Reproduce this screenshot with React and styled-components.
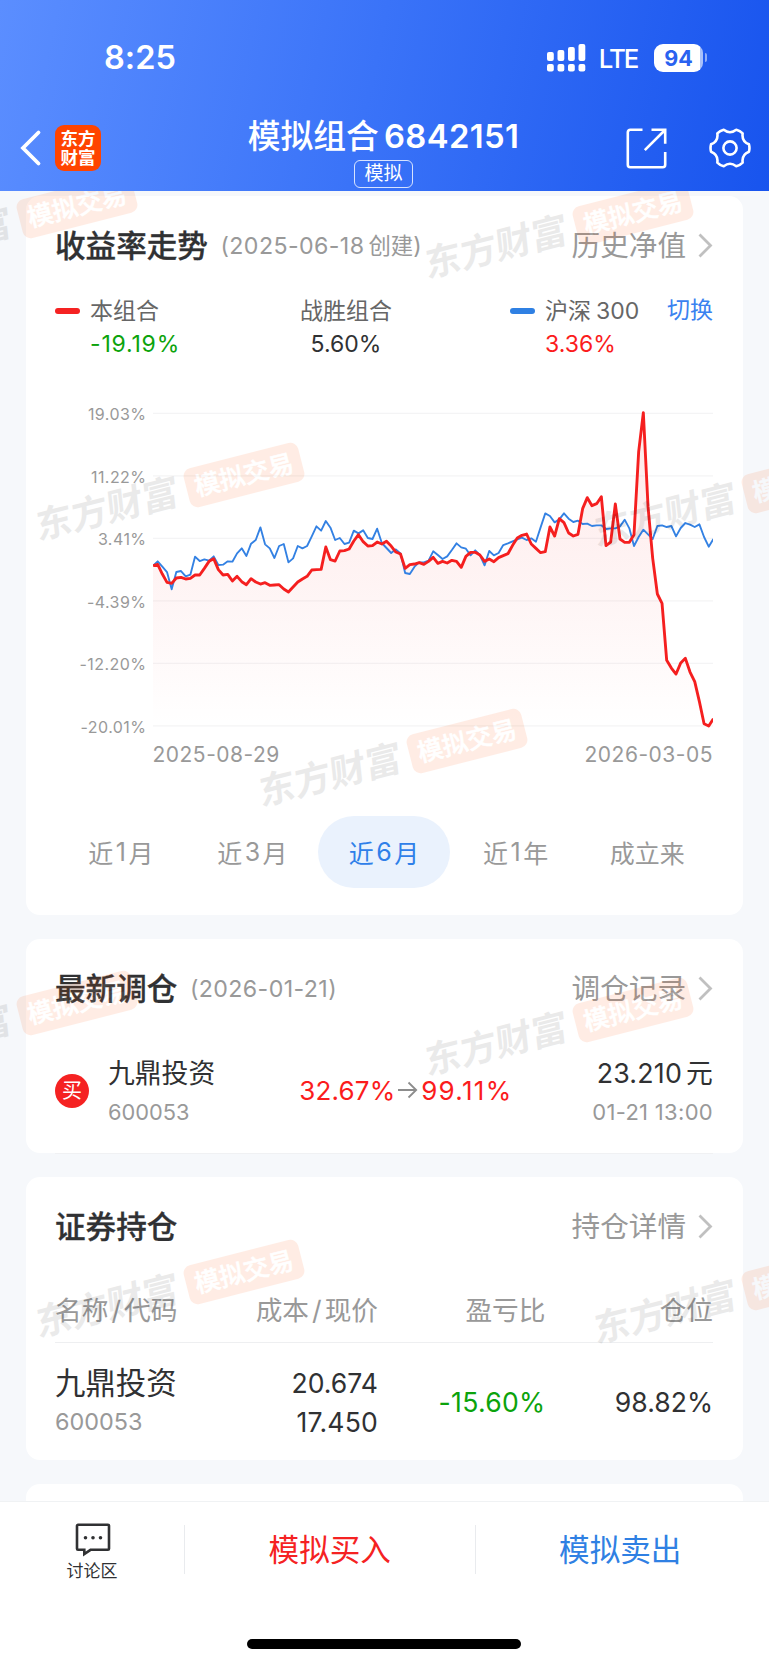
import React from "react";
import styled, { createGlobalStyle, css } from "styled-components";

const GlobalStyle = createGlobalStyle`
  * {
    box-sizing: border-box;
  }
  body {
    margin: 0;
    background: #f6f8fb;
    color: #303133;
    font-family: Inter, "Noto Sans CJK SC", sans-serif;
    font-feature-settings: "calt" 0;
  }
`

const Page = styled.div`
  width: 769px;
  height: 1665px;
  display: flex;
  flex-direction: column;
  overflow: hidden;
`

/* ---------- cabecera ---------- */
const Header = styled.header`
  height: 191px;
  flex: none;
  color: #fff;
  background: linear-gradient(102deg, #5b8eff 0%, #3a73f8 48%, #1854ee 100%);
`
const StatusBar = styled.div`
  height: 105px;
  padding: 37px 62px 0 104px;
  display: flex;
  justify-content: space-between;
`
const Clock = styled.span`
  font-size: 32.5px;
  font-weight: 600;
  line-height: 42px;
`
const StatusIcons = styled.div`
  height: 41px;
  display: flex;
  align-items: center;
`
const Network = styled.span`
  margin: 2px 0 0 13px;
  font-size: 25.8px;
  font-weight: 500;
  letter-spacing: -1.9px;
  line-height: 30px;
`
const Battery = styled.span`
  width: 49px;
  height: 28px;
  margin-left: 16.5px;
  border-radius: 9px;
  background: linear-gradient(90deg, #fff 46px, #a9c1fa 46px);
  color: #2a62f0;
  font-size: 21.5px;
  font-weight: 700;
  line-height: 28px;
  text-align: center;
`
const BatteryTip = styled.span`
  width: 2.5px;
  height: 9px;
  margin-left: 1.5px;
  border-radius: 0 3px 3px 0;
  background: #8fadf8;
`
const NavBar = styled.div`
  height: 86px;
  padding: 0 18px 0 19px;
  display: grid;
  grid-template-columns: 1fr auto 1fr;
  align-items: center;
`
const NavLeft = styled.div`
  display: flex;
  align-items: center;
  gap: 13px;
`
const NavRight = styled.div`
  display: flex;
  align-items: center;
  justify-content: flex-end;
  gap: 42px;
`
const AppLogo = styled.span`
  width: 46px;
  height: 46px;
  padding-top: 5px;
  border-radius: 9px;
  background: #ff4400;
  font-size: 17.5px;
  font-weight: 700;
  line-height: 18.5px;
  text-align: center;
`
const TitleBlock = styled.div`
  margin-right: 3px;
  padding-top: 8px;
  display: flex;
  flex-direction: column;
  align-items: center;
  gap: 4px;
`
const Title = styled.h1`
  margin: 0;
  display: flex;
  gap: 5px;
  font-size: 32.8px;
  font-weight: 500;
  line-height: 39px;
  b {
    font-weight: 600;
    letter-spacing: 0.4px;
  }
`
const TitleTag = styled.span`
  height: 28px;
  padding: 0 9px;
  border: 1.5px solid rgba(255, 255, 255, 0.8);
  border-radius: 6px;
  font-size: 19px;
  line-height: 26px;
`

/* ---------- contenido ---------- */
const Main = styled.main`
  position: relative;
  height: 1310px;
  flex: none;
  padding: 5px 26.5px 0 26px;
  display: flex;
  flex-direction: column;
  gap: 24px;
  overflow: hidden;
`
const Card = styled.section`
  flex: none;
  height: ${({ $height }) => $height}px;
  padding: 29.5px 29.5px 0 29px;
  border-radius: 14px;
  background: #fff;
`
const CardHead = styled.div`
  height: 40px;
  display: flex;
  align-items: center;
`
const CardTitle = styled.h2`
  margin: 0;
  font-size: 30.6px;
  font-weight: 500;
  line-height: 40px;
  -webkit-text-stroke: 0.3px currentColor;
`
const CardDate = styled.span`
  display: flex;
  gap: 4px;
  margin-left: 12.5px;
  color: #999;
  font-size: 23.2px;
  letter-spacing: 0.4px;
  line-height: 40px;
  i {
    font-style: normal;
    font-size: 22.4px;
    letter-spacing: 0;
  }
`
const CardLink = styled.a`
  margin-left: auto;
  display: flex;
  align-items: center;
  gap: 12px;
  color: #999;
  font-size: 28.6px;
  line-height: 40px;
`

/* leyenda del grafico */
const Legend = styled.div`
  margin-top: 31px;
  display: grid;
  grid-template-columns: 245px 210px 1fr;
  justify-items: start;
`
const LegendItem = styled.div`
  display: grid;
  grid-template-columns: ${({ $line }) => ($line ? "25px auto" : "auto")};
  column-gap: 10px;
  row-gap: 5.5px;
  align-items: center;
  justify-items: ${({ $line }) => ($line ? "start" : "center")};
  font-size: 23px;
  line-height: 28px;
`
const LegendLine = styled.span`
  width: 25px;
  height: 6px;
  border-radius: 3px;
  background: ${({ $color }) => $color};
`
const LegendName = styled.span`
  display: flex;
  gap: 5px;
  color: #666;
`
const LegendValue = styled.span`
  grid-column: -2;
  color: ${({ $color }) => $color};
  letter-spacing: ${({ $wide }) => ($wide ? "0.8px" : "0")};
`
const LegendSide = styled.div`
  width: 100%;
  display: flex;
  align-items: flex-start;
  justify-content: space-between;
`
const SwitchLink = styled.a`
  color: #3a82f0;
  font-size: 23px;
  line-height: 26px;
`

/* grafico */
const ChartBody = styled.div`
  height: 332.7px;
  margin-top: 46.3px;
  display: flex;
`
const Axis = styled.div`
  width: 97.5px;
  padding-right: 6px;
  display: flex;
  flex-direction: column;
  justify-content: space-between;
  color: #999;
  font-size: 16px;
  letter-spacing: 0.45px;
  line-height: 20px;
  text-align: right;
`
const Plot = styled.svg`
  width: 560.5px;
  height: 332.7px;
  display: block;
  overflow: hidden;
`
const ChartDates = styled.div`
  padding: 3px 0 0 97.5px;
  display: flex;
  justify-content: space-between;
  color: #999;
  font-size: 21px;
  letter-spacing: 0.5px;
  line-height: 30px;
`
const Tabs = styled.div`
  margin-top: 46px;
  display: grid;
  grid-template-columns: repeat(5, 1fr);
`
const Tab = styled.button`
  height: 72px;
  padding: 0;
  border: 0;
  border-radius: 36px;
  display: flex;
  align-items: center;
  justify-content: center;
  gap: 2.5px;
  background: none;
  color: #999;
  font-family: inherit;
  font-size: 25px;
  ${({ $active }) => $active && css`
    background: #eaf2fd;
    color: #2f80e9;
  `}
`

/* ultimo ajuste */
const TradeRow = styled.div`
  height: 99px;
  margin-top: 46px;
  display: flex;
  align-items: flex-start;
  border-bottom: 1px solid #f0f1f3;
`
const BuyMark = styled.span`
  width: 34px;
  height: 34px;
  margin: 19px 19px 0 0;
  border-radius: 50%;
  background: #f52222;
  color: #fff;
  font-size: 20px;
  line-height: 34px;
  text-align: center;
`
const Stack = styled.div`
  display: flex;
  flex-direction: column;
  gap: 3px;
  line-height: 36px;
  align-items: ${({ $end }) => ($end ? "flex-end" : "flex-start")};
`
const StockName = styled.span`
  font-size: ${({ $size }) => $size}px;
`
const Muted = styled.span`
  color: #999;
  font-size: ${({ $size }) => $size}px;
  letter-spacing: ${({ $space }) => $space || 0}px;
`
const Change = styled.div`
  width: 212px;
  margin: 17px auto 0 84px;
  display: flex;
  align-items: center;
  justify-content: space-between;
  color: #fb1c1c;
  font-size: 26px;
  letter-spacing: 0.2px;
  line-height: 37px;
  b {
    font-weight: 400;
    letter-spacing: 1.3px;
    margin-right: -1.3px;
  }
`
const Price = styled.span`
  display: flex;
  gap: 4px;
  font-size: 26.8px;
  letter-spacing: 0.2px;
`

/* tabla de posiciones */
const holdingColumns = css`
  display: grid;
  grid-template-columns: 160px 163px 167.5px 1fr;
  align-items: center;
`
const HoldingHead = styled.div`
  ${holdingColumns}
  height: 67px;
  margin-top: 29px;
  padding-bottom: 1px;
  border-bottom: 1px solid #eeeff1;
  color: #999;
  font-size: 26.7px;
  span {
    text-align: right;
  }
  span:first-child {
    text-align: left;
  }
  i {
    margin: 0 3px;
    font-style: normal;
  }
`
const HoldingRow = styled.div`
  ${holdingColumns}
  padding-top: 22px;
`
const Figure = styled.span`
  font-size: 26.6px;
  color: ${({ $color }) => $color || "inherit"};
  letter-spacing: ${({ $space }) => $space || 0}px;
  text-align: right;
`

/* marca de agua sobre el contenido */
const WatermarkLayer = styled.div`
  position: absolute;
  inset: 0;
  overflow: hidden;
  pointer-events: none;
`
const Watermark = styled.div`
  position: absolute;
  left: ${({ $x }) => $x - 214}px;
  top: ${({ $y }) => $y - 20}px;
  width: 273px;
  height: 40px;
  display: flex;
  align-items: center;
  gap: 9px;
  transform: rotate(-14.3deg);
  transform-origin: 214px 20px;
  white-space: nowrap;
`
const WatermarkBrand = styled.span`
  width: 146px;
  color: #000;
  opacity: 0.08;
  font-size: 36.5px;
  font-weight: 700;
  line-height: 40px;
  transform: translateY(-1px) skewX(-8deg);
`
const WatermarkTag = styled.span`
  width: 119px;
  height: 40px;
  border-radius: 8px;
  background: #ff5000;
  color: #fff;
  opacity: 0.1;
  font-size: 25.3px;
  font-weight: 500;
  line-height: 39px;
  text-align: center;
  -webkit-text-stroke: 0.5px #fff;
`

/* ---------- pie ---------- */
const Footer = styled.footer`
  flex: 1;
  display: flex;
  flex-direction: column;
  align-items: center;
  justify-content: space-between;
  padding: 0 1px 16px 0;
  border-top: 1px solid #f0f2f4;
  background: #fff;
`
const Actions = styled.div`
  width: 100%;
  padding: 23px 3px 0 0;
  display: flex;
`
const Discuss = styled.div`
  width: 184px;
  height: 49px;
  display: flex;
  flex-direction: column;
  align-items: center;
  font-size: 17px;
  line-height: 28px;
  svg {
    flex: none;
    margin: -2px 0 0 2px;
  }
`
const Action = styled.button`
  flex: 1;
  height: 49px;
  padding: 0 0 4px;
  border: 0;
  border-left: 1px solid #e9ebee;
  background: none;
  color: ${({ $color }) => $color};
  font-family: inherit;
  font-size: 30.6px;
`
const HomeBar = styled.div`
  width: 274px;
  height: 10px;
  border-radius: 5px;
  background: #000;
`

const BackIcon = () => (
  <svg width="23" height="38" viewBox="0 0 23 38" fill="none" stroke="#fff" strokeWidth="3.8">
    <path d="M19.5 3.5 4 19l15.500 15.500" strokeLinecap="round" />
  </svg>
)

const SignalIcon = () => (
  <svg width="39" height="28" viewBox="0 0 39 28" fill="#fff">
    {[9, 11, 14, 17].map((h, i) => (
      <g key={i}>
        <rect x={i * 10.5} y={17 - h} width="6.8" height={h} rx="2" />
        <rect x={i * 10.5} y="20" width="6.8" height="7.5" rx="2" />
      </g>
    ))}
  </svg>
)

const ShareIcon = () => (
  <svg width="41" height="41" viewBox="0 0 41 41" fill="none" stroke="#fff" strokeWidth="2.6">
    <path d="M16.5 1.8H4.3a2.5 2.5 0 0 0-2.5 2.5v32.4a2.5 2.5 0 0 0 2.5 2.5h32.4a2.5 2.5 0 0 0 2.5-2.5V24" />
    <path d="M25.5 1.8h13.7v14M38.5 2.500 18.800 22.200" />
  </svg>
)

// engranaje de seis lobulos
const gearPath = () => {
  const point = (deg, r) => {
    const a = (deg * Math.PI) / 180
    return `${(21 + r * Math.cos(a)).toFixed(2)} ${(21 + r * Math.sin(a)).toFixed(2)}`
  }
  let d = `M${point(-11, 19.3)}`
  for (let k = 0; k < 6; k++) {
    const base = k * 60
    d += `Q${point(base, 20)} ${point(base + 11, 19.3)}Q${point(base + 30, 13.3)} ${point(base + 49, 19.3)}`
  }
  return d + "Z"
}

const GearIcon = () => (
  <svg width="42" height="42" viewBox="0 0 42 42" fill="none" stroke="#fff" strokeWidth="2.6" strokeLinejoin="round">
    <path d={gearPath()} />
    <circle cx="21" cy="21" r="6.6" />
  </svg>
)

const ArrowIcon = () => (
  <svg width="15" height="25" viewBox="0 0 15 25" fill="none" stroke="#c0c0c0" strokeWidth="2.8">
    <path d="M1.5 1.5 12.5 12.5l-11 11" />
  </svg>
)

const ToIcon = () => (
  <svg width="20" height="18" viewBox="0 0 20 18" fill="none" stroke="#8c8c8c" strokeWidth="1.8">
    <path d="M0 9h18M10.5 1.5 18.2 9l-7.7 7.5" />
  </svg>
)

const ChatIcon = () => (
  <svg width="36" height="34" viewBox="0 0 36 34" fill="none" stroke="#303133" strokeWidth="2.6">
    <path d="M3 1.8h30a1 1 0 0 1 1 1v23a1 1 0 0 1-1 1H15.5L9.3 31v-4.2H3a1 1 0 0 1-1-1v-23a1 1 0 0 1 1-1Z" />
    <g fill="#303133" stroke="none">
      <circle cx="10.5" cy="14.8" r="1.8" />
      <circle cx="18" cy="14.8" r="1.8" />
      <circle cx="25.5" cy="14.8" r="1.8" />
    </g>
  </svg>
)

const portfolio = [
  527, 523, 552, 577, 580, 564, 562, 567, 565, 555, 555, 535, 514, 506, 539, 555, 553, 573, 559, 575,
  584, 566, 576, 582, 578, 586, 585, 584, 597, 606, 591, 576, 567, 559, 540, 539, 538, 471, 509, 513,
  483, 482, 477, 453, 434, 455, 468, 467, 456, 462, 454, 468, 486, 492, 535, 524, 522, 518, 523, 514,
  502, 520, 514, 519, 511, 514, 532, 499, 487, 487, 495, 514, 507, 515, 503, 497, 491, 466, 444, 436,
  432, 462, 475, 488, 485, 411, 438, 386, 398, 429, 438, 433, 356, 323, 347, 341, 320, 467, 456, 342,
  447, 457, 457, 434, 185, 68, 350, 505, 612, 640, 811, 834, 852, 819, 805, 846, 875, 935, 1001, 1008,
  986,
]
const csi300 = [
  527, 514, 530, 546, 598, 546, 543, 559, 554, 500, 513, 508, 512, 499, 525, 524, 514, 515, 490, 475,
  498, 461, 450, 412, 463, 475, 504, 468, 462, 517, 505, 468, 475, 468, 439, 409, 422, 393, 413, 450,
  444, 462, 458, 422, 430, 421, 444, 447, 416, 459, 474, 489, 478, 490, 549, 552, 530, 517, 517, 512,
  484, 495, 507, 499, 480, 460, 472, 476, 496, 481, 495, 526, 483, 496, 489, 465, 460, 454, 448, 443,
  450, 445, 455, 412, 370, 378, 397, 388, 370, 386, 396, 392, 402, 401, 408, 406, 406, 417, 415, 415,
  409, 389, 415, 468, 441, 419, 433, 447, 408, 406, 411, 408, 439, 414, 399, 404, 411, 403, 441, 470,
  447,
]
const toPoints = (values) => values.map((y, i) => `${(i * 14.01).toFixed(1)},${y}`).join(" ")

const axisLabels = ["19.03%", "11.22%", "3.41%", "-4.39%", "-12.20%", "-20.01%"]
const gridLines = [70, 257.5, 445, 632.5, 820, 1007.5]

function Chart() {
  return (
    <ChartBody>
      <Axis>
        {axisLabels.map((label) => <span key={label}>{label}</span>)}
      </Axis>
      <Plot viewBox="0 42 1681.5 998" preserveAspectRatio="none">
        <defs>
          <linearGradient id="area" x1="0" y1="70" x2="0" y2="1007" gradientUnits="userSpaceOnUse">
            <stop offset="0" stopColor="#f52222" stopOpacity="0.1" />
            <stop offset="0.55" stopColor="#f52222" stopOpacity="0.05" />
            <stop offset="1" stopColor="#f52222" stopOpacity="0" />
          </linearGradient>
        </defs>
        {gridLines.map((y) => <path key={y} d={`M0 ${y}H1682`} stroke="#f4f4f5" strokeWidth="3.5" />)}
        <polygon points={`0,1007 ${toPoints(portfolio)} 1681,1007`} fill="url(#area)" />
        <polyline points={toPoints(csi300)} fill="none" stroke="#3381e3" strokeWidth="5.6" strokeLinejoin="round" />
        <polyline points={toPoints(portfolio)} fill="none" stroke="#f51f1f" strokeWidth="8.6" strokeLinejoin="round" />
      </Plot>
    </ChartBody>
  )
}

const watermarks = [
  [76.5, 14.7], [633.4, 22.3],
  [243.5, 284], [801.5, 290],
  [466.5, 549.5],
  [76.5, 811.7], [633.4, 819],
  [243.5, 1081], [801.5, 1087],
]

const tabs = [["近", "1", "月"], ["近", "3", "月"], ["近", "6", "月"], ["近", "1", "年"], ["成立来"]]

export default function App() {
  return (
    <Page>
      <GlobalStyle />
      <Header>
        <StatusBar>
          <Clock>8:25</Clock>
          <StatusIcons>
            <SignalIcon />
            <Network>LTE</Network>
            <Battery>94</Battery>
            <BatteryTip />
          </StatusIcons>
        </StatusBar>
        <NavBar>
          <NavLeft>
            <BackIcon />
            <AppLogo>东方<br />财富</AppLogo>
          </NavLeft>
          <TitleBlock>
            <Title>模拟组合<b>6842151</b></Title>
            <TitleTag>模拟</TitleTag>
          </TitleBlock>
          <NavRight>
            <ShareIcon />
            <GearIcon />
          </NavRight>
        </NavBar>
      </Header>

      <Main>
        <Card $height={719}>
          <CardHead>
            <CardTitle>收益率走势</CardTitle>
            <CardDate>(2025-06-18<span><i>创建</i>)</span></CardDate>
            <CardLink>历史净值<ArrowIcon /></CardLink>
          </CardHead>
          <Legend>
            <LegendItem $line>
              <LegendLine $color="#f52222" />
              <LegendName>本组合</LegendName>
              <LegendValue $color="#0ca30c" $wide>-19.19%</LegendValue>
            </LegendItem>
            <LegendItem>
              <LegendName>战胜组合</LegendName>
              <LegendValue $color="#303133">5.60%</LegendValue>
            </LegendItem>
            <LegendSide>
              <LegendItem $line>
                <LegendLine $color="#2f80e3" />
                <LegendName>沪深<span>300</span></LegendName>
                <LegendValue $color="#fb1c1c">3.36%</LegendValue>
              </LegendItem>
              <SwitchLink>切换</SwitchLink>
            </LegendSide>
          </Legend>
          <Chart />
          <ChartDates>
            <span>2025-08-29</span>
            <span>2026-03-05</span>
          </ChartDates>
          <Tabs>
            {tabs.map((parts, i) => (
              <Tab key={i} $active={i === 2}>
                {parts.map((part) => <span key={part}>{part}</span>)}
              </Tab>
            ))}
          </Tabs>
        </Card>

        <Card $height={214}>
          <CardHead>
            <CardTitle>最新调仓</CardTitle>
            <CardDate>(2026-01-21)</CardDate>
            <CardLink>调仓记录<ArrowIcon /></CardLink>
          </CardHead>
          <TradeRow>
            <BuyMark>买</BuyMark>
            <Stack>
              <StockName $size={26.8}>九鼎投资</StockName>
              <Muted $size={21.8}>600053</Muted>
            </Stack>
            <Change>32.67%<ToIcon /><b>99.11%</b></Change>
            <Stack $end>
              <Price>23.210<span>元</span></Price>
              <Muted $size={22} $space={0.3}>01-21 13:00</Muted>
            </Stack>
          </TradeRow>
        </Card>

        <Card $height={283}>
          <CardHead>
            <CardTitle>证券持仓</CardTitle>
            <CardLink>持仓详情<ArrowIcon /></CardLink>
          </CardHead>
          <HoldingHead>
            <span>名称<i>/</i>代码</span>
            <span>成本<i>/</i>现价</span>
            <span>盈亏比</span>
            <span>仓位</span>
          </HoldingHead>
          <HoldingRow>
            <Stack>
              <StockName $size={30.4}>九鼎投资</StockName>
              <Muted $size={23.4}>600053</Muted>
            </Stack>
            <Stack $end>
              <Figure>20.674</Figure>
              <Figure $space={0.2}>17.450</Figure>
            </Stack>
            <Figure $color="#0ca30c" $space={0.3}>-15.60%</Figure>
            <Figure>98.82%</Figure>
          </HoldingRow>
        </Card>

        <Card $height={60} />

        <WatermarkLayer>
          {watermarks.map(([x, y]) => (
            <Watermark key={`${x}-${y}`} $x={x} $y={y}>
              <WatermarkBrand>东方财富</WatermarkBrand>
              <WatermarkTag>模拟交易</WatermarkTag>
            </Watermark>
          ))}
        </WatermarkLayer>
      </Main>

      <Footer>
        <Actions>
          <Discuss>
            <ChatIcon />
            讨论区
          </Discuss>
          <Action $color="#f52222">模拟买入</Action>
          <Action $color="#2f80e3">模拟卖出</Action>
        </Actions>
        <HomeBar />
      </Footer>
    </Page>
  )
}
